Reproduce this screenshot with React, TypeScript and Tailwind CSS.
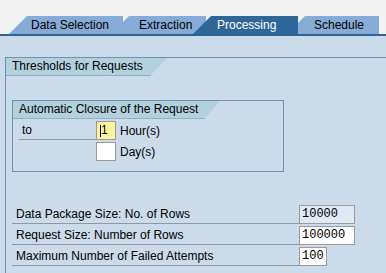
const tabs = [
  { label: "Data Selection", cls: "ml-[9px] w-[114px] pl-[22px] z-30 bg-[#86abd7] text-black" },
  { label: "Extraction", cls: "ml-[-12px] w-[95px] pl-[28px] z-20 bg-[#86abd7] text-black" },
  { label: "Processing", cls: "ml-[-13px] w-[105px] pl-[24px] z-40 bg-[#2f6898] text-white" },
  { label: "Schedule", cls: "ml-[-11px] w-[92px] pl-[27px] z-10 bg-[#86abd7] text-black" },
];

function Field({ value, w, bg = "bg-white" }: { value: string; w: string; bg?: string }) {
  return (
    <div
      className={`${w} ${bg} h-[19px] border border-[#9a9a9a] pl-[2px] leading-[17px] text-[12px] text-black`}
      style={{ fontFamily: '"Liberation Mono", monospace' }}
    >
      {value}
    </div>
  );
}

function Row({ label, value, w, bg }: { label: string; value: string; w: string; bg?: string }) {
  return (
    <div className="flex h-[19px]">
      <div className="ml-[6px] w-[287px] h-[19px] border-b border-[#8d98a6] pl-[4px] leading-[18px]">{label}</div>
      <Field value={value} w={w} bg={bg} />
    </div>
  );
}

export default function App() {
  return (
    <div
      className="w-[386px] h-[273px] overflow-hidden bg-[#cbdbea] text-[12px] text-black"
      style={{ fontFamily: '"Liberation Sans", Arial, sans-serif' }}
    >
      {/* tab strip */}
      <div className="bg-[#f2f2f2] pt-[16px] flex">
        {tabs.map((t) => (
          <div
            key={t.label}
            className={`relative h-[18px] leading-[18px] shrink-0 [clip-path:polygon(18px_0,100%_0,100%_100%,0_100%)] ${t.cls}`}
          >
            {t.label}
          </div>
        ))}
      </div>
      <div className="h-[2px] bg-[#2d6396]" />

      <div className="pl-[5px] pt-[21px]">
        <div className="border-l border-t border-[#6f90b3] h-[220px]">
          <div className="w-[161px] h-[18px] bg-[#b3d0dd] border-b border-[#8fb0c4] pl-[6px] leading-[17px] [clip-path:polygon(0_0,100%_0,144px_100%,0_100%)]">
            Thresholds for Requests
          </div>

          {/* inner group */}
          <div className="ml-[6px] mt-[24px] w-[272px] border border-[#6f90b3] pb-[10px]">
            <div className="w-[207px] h-[18px] bg-[#b3d0dd] border-b border-[#8fb0c4] pl-[6px] leading-[17px] [clip-path:polygon(0_0,100%_0,191px_100%,0_100%)]">
              Automatic Closure of the Request
            </div>
            <div className="mt-[2px] flex flex-col gap-[2px]">
              <div className="flex items-center h-[19px]">
                <div className="ml-[6px] w-[77px] h-[19px] border-b border-[#8d98a6] pl-[3px] leading-[18px]">to</div>
                <div className="w-[20px] h-[19px] border border-[#9a9a9a] bg-[#fff3a0] flex items-center pl-[3px]">
                  <span className="w-px h-[12px] bg-black" />
                  <span className="leading-[17px]">1</span>
                </div>
                <span className="ml-[4px]">Hour(s)</span>
              </div>
              <div className="flex items-center h-[19px]">
                <div className="ml-[6px] w-[77px]" />
                <div className="w-[20px] h-[19px] border border-[#9a9a9a] bg-white" />
                <span className="ml-[4px]">Day(s)</span>
              </div>
            </div>
          </div>

          <div className="mt-[33px] flex flex-col gap-[2px]">
            <Row label="Data Package Size: No. of Rows" value="10000" w="w-[56px]" bg="bg-[#dfe8f3]" />
            <Row label="Request Size: Number of Rows" value="100000" w="w-[56px]" />
            <Row label="Maximum Number of Failed Attempts" value="100" w="w-[28px]" />
          </div>
        </div>
      </div>
    </div>
  );
}
